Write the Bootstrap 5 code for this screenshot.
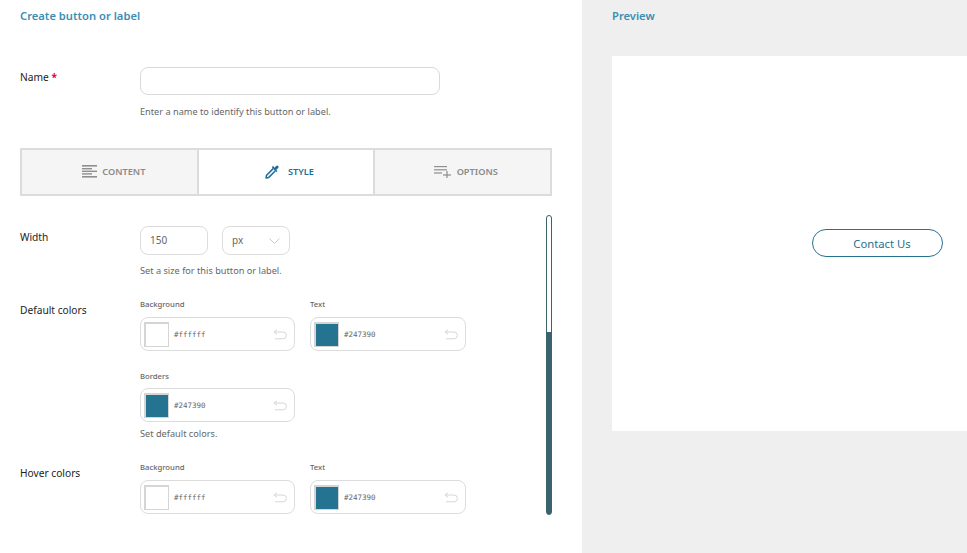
<!DOCTYPE html>
<html lang="en">
<head>
<meta charset="utf-8">
<title>Create button or label</title>
<link href="https://cdn.jsdelivr.net/npm/bootstrap@5.3.0/dist/css/bootstrap.min.css" rel="stylesheet">
<style>
html,body{height:553px;overflow:hidden;}
body{font-family:"Noto Sans","Open Sans","Liberation Sans",sans-serif;font-size:10.2px;color:#222;background:#fff;}
.shell{height:553px;width:967px;}
.editor{width:582px;flex:none;padding:0 30px 0 20px;}
.viewer{flex:1 1 auto;background:#efefef;padding-left:30px;min-width:0;}
.pane-title{font-size:11.2px;font-weight:600;color:#3a8fb4;line-height:16px;margin:0;padding-top:8px;height:56px;}
.name-row{height:92px;padding-top:11px;}
.label-col{width:120px;flex:none;font-size:10.2px;line-height:16px;padding-top:3px;color:#222;}
.name-row .label-col{padding-top:2px;}
.req{color:#e4003a;font-weight:700;}
.plain-input{border:1px solid #d9d9d9;border-radius:8px;height:28px;width:300px;background:#fff;}
.hint{font-size:9.2px;line-height:14px;color:#666;}
.name-row .hint{margin-top:10px;}
.tabset{border:2px solid #dcdcdc;height:48px;}
.tabitem{flex:1 1 0;background:#f5f5f5;color:#8a8a8a;font-size:9.2px;font-weight:600;gap:6px;padding:0 0 1px 6px;}
.tabitem:first-child{gap:5px;}
.tabitem:first-child svg{margin-left:3px;}
.tabitem + .tabitem{border-left:2px solid #dcdcdc;}
.tabitem.on{background:#fff;color:#1c6d99;gap:8px;}
.scroller{margin-top:19px;height:300px;}
.scroll-body{flex:1 1 auto;min-width:0;padding-top:11px;}
.rail{width:6px;flex:none;height:300px;border:1px solid #3a636e;border-radius:3px;display:flex;flex-direction:column;justify-content:flex-end;}
.rail-fill{height:182px;background:#3a636e;}
.num-box{width:68px;height:29px;border:1px solid #dcdcdc;border-radius:8px;padding-left:9px;font-size:10px;color:#666;line-height:27px;}
.unit-box{width:68px;height:29px;border:1px solid #dcdcdc;border-radius:8px;padding:0 9px;font-size:10px;color:#666;}
.unit-gap{gap:14px;}
.width-row{height:73px;}
.width-row .hint{margin-top:9px;}
.swatch-label{font-size:7.7px;line-height:10px;color:#666;margin-bottom:8px;font-weight:500;}
.color-box{width:155px;height:34px;border:1px solid #dcdcdc;border-radius:8px;padding:0 7px 0 3px;}
.chip{width:25px;height:25px;border:1px solid #d5d5d5;border-top-width:2px;border-left-width:2px;flex:none;background:#fff;}
.chip.teal{background:#247390;}
.code{font-family:"DejaVu Sans Mono","Liberation Mono",monospace;font-size:7.5px;line-height:10px;color:#666;margin:2px 0 0 5px;}
.color-grid{display:flex;flex-wrap:wrap;column-gap:15px;width:340px;}
.color-cell{width:155px;}
.color-cell:nth-child(2) .color-box{width:156px;}
.color-cell.third{margin-top:20px;}
.color-cell.third .swatch-label{margin-bottom:7px;}
.default-row{height:163px;}
.default-row .hint{margin-top:5px;}
.canvas-panel{height:375px;background:#fff;}
.cta{width:131px;height:28px;border:1px solid #247390;border-radius:14px;color:#247390;background:#fff;font-size:11.3px;line-height:27px;text-align:center;padding:0 0 0 9px;}
.cta-wrap{padding:173px 0 0 200px;}
</style>
</head>
<body>
<div class="shell d-flex">
  <section class="editor">
    <h1 class="pane-title">Create button or label</h1>
    <div class="name-row d-flex">
      <div class="label-col">Name <span class="req">*</span></div>
      <div>
        <div class="plain-input"></div>
        <div class="hint">Enter a name to identify this button or label.</div>
      </div>
    </div>
    <div class="tabset d-flex">
      <div class="tabitem d-flex align-items-center justify-content-center">
        <svg width="15" height="15" viewBox="0 0 15 15" fill="#8f8f8f"><rect x="0" y="1" width="15" height="1.6"/><rect x="0" y="4" width="10" height="1.4"/><rect x="0" y="6.6" width="15" height="1.4"/><rect x="0" y="9.2" width="10" height="1.4"/><rect x="0" y="12" width="15" height="1.6"/></svg>
        <span>CONTENT</span>
      </div>
      <div class="tabitem on d-flex align-items-center justify-content-center">
        <svg width="16" height="16" viewBox="0 0 16 16" fill="none"><path d="M9.2 4.6 2.6 11.2 2 14l2.8-.6 6.6-6.6" stroke="#1c6d99" stroke-width="1.5" stroke-linejoin="round"/><path d="M8 3.5 12.5 8l1-1-1.2-1.2 1.9-1.9a1.4 1.4 0 0 0-2-2l-1.9 1.9L9 1.6z" fill="#1c6d99"/></svg>
        <span>STYLE</span>
      </div>
      <div class="tabitem d-flex align-items-center justify-content-center">
        <svg width="17" height="13" viewBox="0 0 17 13" fill="#8f8f8f"><rect x="0" y="1" width="13" height="1.2"/><rect x="0" y="4.2" width="13" height="1.2"/><rect x="0" y="7.4" width="8" height="1.2"/><rect x="9" y="9.4" width="8" height="1.2"/><rect x="12.4" y="6" width="1.2" height="7"/></svg>
        <span>OPTIONS</span>
      </div>
    </div>
    <div class="scroller d-flex">
      <div class="scroll-body">
        <div class="width-row d-flex">
          <div class="label-col">Width</div>
          <div>
            <div class="d-flex unit-gap align-items-center">
              <div class="num-box">150</div>
              <div class="unit-box d-flex align-items-center justify-content-between"><span>px</span><svg width="11" height="6" viewBox="0 0 11 6" fill="none"><path d="M.5.5 5.5 5.5 10.5.5" stroke="#c8c8c8"/></svg></div>
            </div>
            <div class="hint">Set a size for this button or label.</div>
          </div>
        </div>
        <div class="default-row d-flex">
          <div class="label-col">Default colors</div>
          <div>
            <div class="color-grid">
              <div class="color-cell">
                <div class="swatch-label">Background</div>
                <div class="color-box d-flex align-items-center justify-content-between"><div class="d-flex align-items-center"><div class="chip"></div><span class="code">#ffffff</span></div><svg width="14" height="11" viewBox="0 0 14 11" fill="none"><path d="M4 .8 1 3l3 2.2M1 3h9a3 3 0 0 1 0 6.8H2" stroke="#d6d6d6"/></svg></div>
              </div>
              <div class="color-cell">
                <div class="swatch-label">Text</div>
                <div class="color-box d-flex align-items-center justify-content-between"><div class="d-flex align-items-center"><div class="chip teal"></div><span class="code">#247390</span></div><svg width="14" height="11" viewBox="0 0 14 11" fill="none"><path d="M4 .8 1 3l3 2.2M1 3h9a3 3 0 0 1 0 6.8H2" stroke="#d6d6d6"/></svg></div>
              </div>
              <div class="color-cell third">
                <div class="swatch-label">Borders</div>
                <div class="color-box d-flex align-items-center justify-content-between"><div class="d-flex align-items-center"><div class="chip teal"></div><span class="code">#247390</span></div><svg width="14" height="11" viewBox="0 0 14 11" fill="none"><path d="M4 .8 1 3l3 2.2M1 3h9a3 3 0 0 1 0 6.8H2" stroke="#d6d6d6"/></svg></div>
              </div>
            </div>
            <div class="hint">Set default colors.</div>
          </div>
        </div>
        <div class="d-flex">
          <div class="label-col">Hover colors</div>
          <div class="color-grid">
            <div class="color-cell">
              <div class="swatch-label">Background</div>
              <div class="color-box d-flex align-items-center justify-content-between"><div class="d-flex align-items-center"><div class="chip"></div><span class="code">#ffffff</span></div><svg width="14" height="11" viewBox="0 0 14 11" fill="none"><path d="M4 .8 1 3l3 2.2M1 3h9a3 3 0 0 1 0 6.8H2" stroke="#d6d6d6"/></svg></div>
            </div>
            <div class="color-cell">
              <div class="swatch-label">Text</div>
              <div class="color-box d-flex align-items-center justify-content-between"><div class="d-flex align-items-center"><div class="chip teal"></div><span class="code">#247390</span></div><svg width="14" height="11" viewBox="0 0 14 11" fill="none"><path d="M4 .8 1 3l3 2.2M1 3h9a3 3 0 0 1 0 6.8H2" stroke="#d6d6d6"/></svg></div>
            </div>
          </div>
        </div>
      </div>
      <div class="rail"><div class="rail-fill"></div></div>
    </div>
  </section>
  <section class="viewer">
    <h2 class="pane-title">Preview</h2>
    <div class="canvas-panel"><div class="cta-wrap"><div class="cta">Contact Us</div></div></div>
  </section>
</div>
<script src="https://cdn.jsdelivr.net/npm/bootstrap@5.3.0/dist/js/bootstrap.bundle.min.js"></script>
</body>
</html>
